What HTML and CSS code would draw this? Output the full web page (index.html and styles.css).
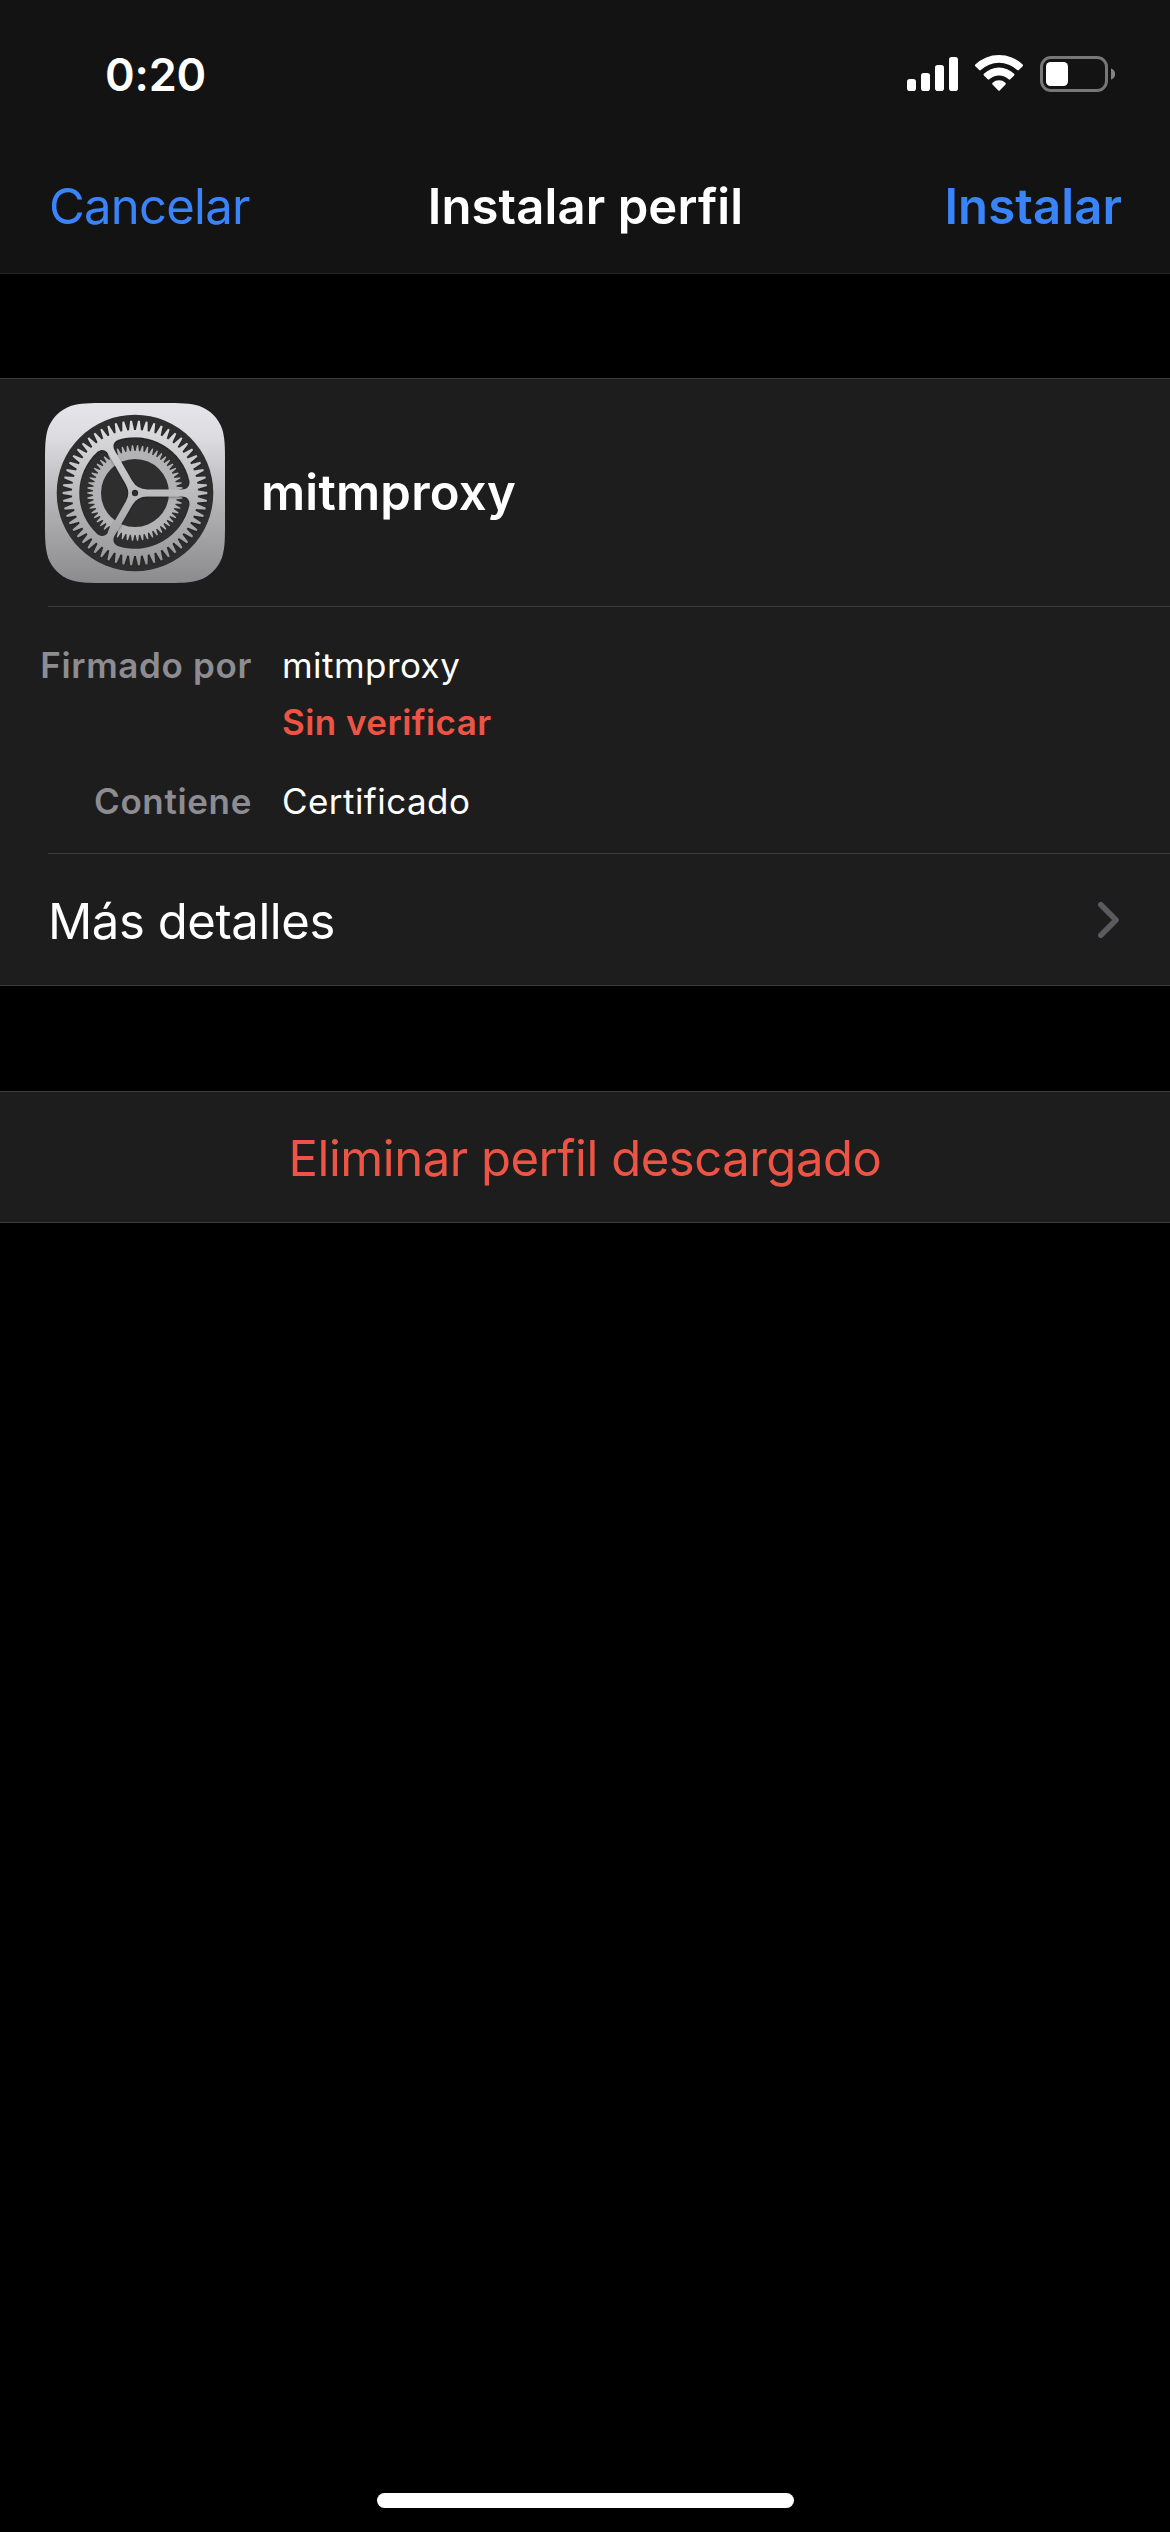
FILE: index.html
```
<!DOCTYPE html>
<html lang="es">
<head>
<meta charset="utf-8">
<title>Instalar perfil</title>
<link rel="stylesheet" href="styles.css">
</head>
<body>
<div class="screen">
  <header class="top">
    <div class="status">
      <span class="time">0:20</span>
      <svg class="status-icons" width="210" height="40" viewBox="905 54 210 40" fill="#fff" aria-hidden="true">
        <rect x="907" y="79" width="9" height="12" rx="2.8"/>
        <rect x="921" y="73" width="9" height="18" rx="2.8"/>
        <rect x="935" y="65" width="9" height="26" rx="2.8"/>
        <rect x="949" y="57" width="9" height="34" rx="2.8"/>
        <path d="M975.3 64.6A34 34 0 0 1 1022.700 64.600Q1023.500 65.500 1022.700 66.300L1018.800 70.100Q1018 70.800 1017.200 70A26.500 26.500 0 0 0 980.800 70Q980 70.800 979.200 70.100L975.300 66.300Q974.500 65.500 975.300 64.600Z"/>
        <path d="M983.900 73.800A21.500 21.500 0 0 1 1014.100 73.800Q1015 74.700 1014.100 75.500L1010.300 79.300Q1009.500 80 1008.700 79.300A14 14 0 0 0 989.300 79.300Q988.500 80 987.700 79.300L983.900 75.500Q983 74.700 983.900 73.800Z"/>
        <path d="M992.600 82.800A9.500 9.500 0 0 1 1005.400 82.800Q1006.300 83.700 1005.500 84.500L999.700 90.400Q999 91.100 998.300 90.400L992.500 84.500Q991.700 83.700 992.600 82.800Z"/>
        <rect x="1041.500" y="57.500" width="65" height="33" rx="9.500" fill="none" stroke="#777" stroke-width="3"/>
        <rect x="1046" y="62" width="22" height="24" rx="4.500"/>
        <path d="M1111 68.300Q1115.200 70 1115.200 74T1111 79.800Z" fill="#838383"/>
      </svg>
    </div>
    <nav class="nav">
      <a class="nav-action cancel">Cancelar</a>
      <h1 class="nav-title">Instalar perfil</h1>
      <a class="nav-action install">Instalar</a>
    </nav>
  </header>

  <main>
    <section class="group">
      <div class="profile">
        <svg class="app-icon" width="180" height="180" viewBox="0 0 180 180" aria-hidden="true">
          <defs>
            <linearGradient id="metal" gradientUnits="userSpaceOnUse" x1="0" y1="0" x2="0" y2="180">
              <stop offset="0" stop-color="#e6e5ea"/><stop offset=".2" stop-color="#dcdbe0"/><stop offset=".5" stop-color="#b9b9bc"/><stop offset="1" stop-color="#8b8b8e"/>
            </linearGradient>
            <linearGradient id="gearMetal" gradientUnits="userSpaceOnUse" x1="0" y1="-90" x2="0" y2="90">
              <stop offset="0" stop-color="#e8e8ec"/><stop offset=".5" stop-color="#bbbbbe"/><stop offset="1" stop-color="#8e8e91"/>
            </linearGradient>
            <filter id="shade" x="-20%" y="-20%" width="140%" height="140%">
              <feDropShadow dx="0" dy="1" stdDeviation="1.300" flood-color="#000" flood-opacity=".4"/>
            </filter>
          </defs>
          <path fill="url(#metal)" d="M61.900 0H118.100C135.900 0 144.800 0 154.400 3C164.900 6.800 173.200 15.100 177 25.600C180 35.200 180 44.100 180 61.900V118.100C180 135.900 180 144.800 177 154.400C173.200 164.900 164.900 173.200 154.400 177C144.800 180 135.900 180 118.100 180H61.900C44.100 180 35.200 180 25.600 177C15.100 173.200 6.800 164.900 3 154.400C0 144.800 0 135.900 0 118.100V61.900C0 44.100 0 35.200 3 25.600C6.800 15.100 15.100 6.800 25.600 3C35.200 0 44.100 0 61.900 0Z"/>
          <circle cx="90" cy="90" r="78.300" fill="#2e2e2e"/>
          <g transform="translate(90 90)" fill-rule="evenodd">
            <path id="innerGear" fill="#b3b3b5"/>
            <path id="outerGear" fill="url(#gearMetal)" filter="url(#shade)"/>
          </g>
        </svg>
        <h2 class="profile-name">mitmproxy</h2>
      </div>
      <dl class="details">
        <dt>Firmado por</dt>
        <dd>mitmproxy<br><strong class="unverified">Sin verificar</strong></dd>
        <dt>Contiene</dt>
        <dd>Certificado</dd>
      </dl>
      <a class="more">
        <span>Más detalles</span>
        <svg width="24" height="40" viewBox="0 0 24 40" fill="none" stroke="#5b5a5f" stroke-width="5.600" stroke-linecap="round" stroke-linejoin="round" aria-hidden="true"><path d="M3.800 4.800L19 20L3.800 35.200"/></svg>
      </a>
    </section>

    <section class="group">
      <a class="remove">Eliminar perfil descargado</a>
    </section>
  </main>

  <footer class="home"><div class="home-bar"></div></footer>
</div>
<script src="gear.js"></script>
</body>
</html>
```
FILE: styles.css
```
* { box-sizing: border-box; }

body {
  margin: 0;
  background: #000;
  color: #fff;
  font-family: Inter, "Liberation Sans", sans-serif;
  font-size: 49px;
}

h1, h2, dl, dd { margin: 0; font-size: inherit; }

.screen {
  display: flex;
  flex-direction: column;
  width: 1170px;
  height: 2532px;
}

.top {
  height: 274px;
  background: #131313;
  border-bottom: 1px solid #272728;
}

.status {
  display: flex;
  justify-content: space-between;
  align-items: flex-start;
  height: 141px;
  padding: 52px 55px 0 105px;
}

.time {
  font-size: 45px;
  font-weight: 600;
  line-height: 46px;
  letter-spacing: -0.2px;
}

.status-icons { display: block; margin-top: 2px; }

.nav {
  display: grid;
  grid-template-columns: 1fr auto 1fr;
  align-items: center;
  height: 132px;
  padding: 0 48px 0 49px;
  line-height: 60px;
}

.nav-action { color: #3a84fb; }
.cancel { letter-spacing: -0.74px; }
.install { justify-self: end; font-weight: 600; letter-spacing: 0.13px; }
.nav-title { font-weight: 600; letter-spacing: 0.11px; }

.group {
  margin-top: 104px;
  background: #1d1d1d;
  border-top: 1px solid #3c3c3d;
  border-bottom: 1px solid #3c3c3d;
}

.group + .group { margin-top: 105px; }

.profile {
  display: flex;
  align-items: center;
  gap: 36px;
  height: 227px;
  padding-left: 45px;
}

.app-icon { display: block; }

.profile-name { font-weight: 600; line-height: 60px; letter-spacing: 0.25px; }

.details {
  display: grid;
  grid-template-columns: 252px 1fr;
  column-gap: 30px;
  row-gap: 21px;
  padding: 31px 0 24px;
  font-size: 35px;
  line-height: 57px;
  letter-spacing: 0.45px;
  background:
    linear-gradient(#3c3c3d, #3c3c3d) 48px 0 / 1122px 1px no-repeat,
    linear-gradient(#3c3c3d, #3c3c3d) 48px 100% / 1122px 1px no-repeat;
  height: 248px;
}

.details dt {
  color: #8d8c92;
  font-weight: 600;
  letter-spacing: 0.65px;
  text-align: right;
}

.unverified { color: #ec5545; font-weight: 600; }

.more {
  display: flex;
  align-items: center;
  justify-content: space-between;
  height: 131px;
  padding: 0 49px 0 48px;
  letter-spacing: -0.42px;
}

.more span { padding-top: 3px; }

.remove {
  display: block;
  height: 130px;
  padding-top: 2px;
  color: #ec5545;
  line-height: 130px;
  text-align: center;
  letter-spacing: -0.47px;
}

.home {
  display: flex;
  justify-content: center;
  margin-top: auto;
  padding-bottom: 24px;
}

.home-bar {
  width: 417px;
  height: 15px;
  border-radius: 8px;
  background: #fff;
}
```
FILE: gear.js
```
// Builds the two toothed rings of the settings icon around the origin.
const at = (r, a) => (r * Math.cos(a)).toFixed(2) + ' ' + (r * Math.sin(a)).toFixed(2);

function teeth(count, root, tip, rootHalf, tipHalf) {
  const pts = [];
  for (let i = 0; i < count; i++) {
    const a = i * 2 * Math.PI / count;
    pts.push(at(root, a - rootHalf / root), at(tip, a - tipHalf / tip),
             at(tip, a + tipHalf / tip), at(root, a + rootHalf / root));
  }
  return 'M' + pts.join('L') + 'Z';
}

const hole = r => `M${r} 0A${r} ${r} 0 1 0 ${-r} 0A${r} ${r} 0 1 0 ${r} 0Z`;

// One opening between two spokes, turned by a third of a circle each time.
function opening(turn) {
  const p = (x, y) => at(Math.hypot(x, y), Math.atan2(y, x) + turn);
  return `M${p(12, 3.6)}L${p(47, 3.6)}C${p(52, 3.7)} ${p(55, 6.5)} ${p(54.5, 12)}` +
    `A55.8 55.8 0 0 1 ${p(-16.86, 53.2)}C${p(-21.87, 50.88)} ${p(-22.8, 46.88)} ${p(-20.38, 42.5)}` +
    `L${p(-2.88, 12.19)}Q${p(2.1, 3.6)} ${p(12, 3.6)}Z`;
}

const third = 2 * Math.PI / 3;
document.getElementById('outerGear').setAttribute('d',
  teeth(58, 63, 72.3, 2.5, 0.9) + opening(0) + opening(third) + opening(2 * third) + hole(3.2));
document.getElementById('innerGear').setAttribute('d',
  teeth(58, 42, 47.8, 1.7, 0.6) + hole(34));
```
